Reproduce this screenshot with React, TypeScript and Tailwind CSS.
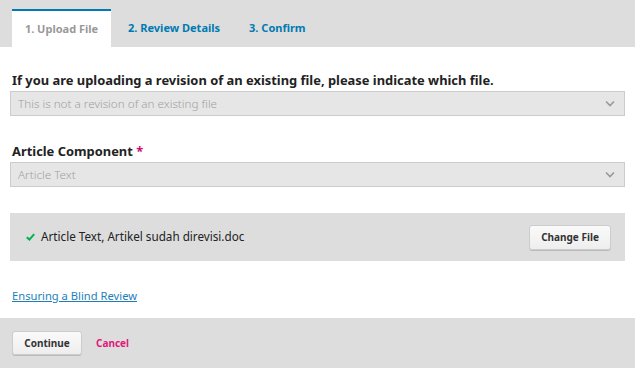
import React from "react"

const Chevron: React.FC = () => (
  <svg width="10" height="7" viewBox="0 0 10 7" className="text-[#999]">
    <path d="M1 1.5 L5 5.5 L9 1.5" fill="none" stroke="currentColor" strokeWidth="1.6" />
  </svg>
)

const Select: React.FC<{ value: string }> = ({ value }) => (
  <div className="mx-[10px] flex h-[25px] items-center justify-between border border-[#ccc] bg-[#e6e6e6] pl-[7px] pr-[9px]">
    <span className="text-[11.7px] font-light text-[#a0a0a0]">{value}</span>
    <Chevron />
  </div>
)

const App: React.FC = () => {
  return (
    <div className="flex h-[368px] w-[635px] flex-col bg-white font-['Noto_Sans',sans-serif] text-[#222]">
      {/* tabs */}
      <div className="flex h-[47px] items-end bg-[#ddd] pl-[12px]">
        <div className="flex h-[38px] w-[99px] items-center justify-center border-t-2 border-[#007ab2] bg-white text-[11px] font-bold text-[#999]">
          1. Upload File
        </div>
        <div className="flex h-[38px] items-center pl-[17px] text-[11px] font-bold text-[#007ab2]">
          2. Review Details
        </div>
        <div className="flex h-[38px] items-center pl-[29px] text-[11px] font-bold text-[#007ab2]">
          3. Confirm
        </div>
      </div>

      <div className="flex-1">
        <div className="pt-[24px]">
          <div className="px-[12px] pb-[2px] text-[12.9px] font-bold leading-[18px] text-[#222]">
            If you are uploading a revision of an existing file, please indicate which file.
          </div>
          <Select value="This is not a revision of an existing file" />
        </div>
        <div className="pt-[26px]">
          <div className="px-[12px] pb-[2px] text-[12.9px] font-bold leading-[18px] text-[#222]">
            Article Component <span className="text-[#d00a6c]">*</span>
          </div>
          <Select value="Article Text" />
        </div>

        <div className="mx-[10px] mt-[26px] flex h-[48px] items-center justify-between bg-[#ddd] pl-[16px] pr-[14px]">
          <div className="flex items-center gap-[6px] text-[11.7px] text-[#222]">
            <svg width="9" height="8" viewBox="0 0 9 8">
              <path d="M0.8 4.2 L3.4 6.6 L8.2 1.2" fill="none" stroke="#00b24e" strokeWidth="2" />
            </svg>
            <span>Article Text, Artikel sudah direvisi.doc</span>
          </div>
          <button className="h-[25px] w-[82px] rounded-[3px] border border-[#ccc] bg-gradient-to-b from-[#fafafa] to-[#eee] text-[10px] font-bold text-[#333] shadow-[0_1px_0_#bbb]">
            Change File
          </button>
        </div>

        <div className="px-[12px] pt-[21px]">
          <a href="#" className="text-[11.2px] text-[#1e7fb8] underline">
            Ensuring a Blind Review
          </a>
        </div>
      </div>

      {/* footer */}
      <div className="flex h-[50px] items-center gap-[14px] bg-[#ddd] px-[12px]">
        <button className="h-[24px] w-[70px] rounded-[3px] border border-[#ccc] bg-gradient-to-b from-[#fafafa] to-[#eee] text-[10px] font-bold text-[#333] shadow-[0_1px_0_#bbb]">
          Continue
        </button>
        <a href="#" className="text-[10px] font-bold text-[#e0187a]">
          Cancel
        </a>
      </div>
    </div>
  )
}

export default App
